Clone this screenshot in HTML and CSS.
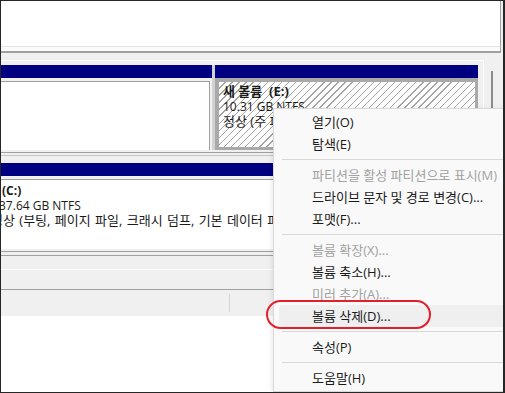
FILE: index.html
```html
<!DOCTYPE html>
<html lang="ko">
<head>
    <meta charset="UTF-8">
    <title>디스크 관리</title>
    <link rel="stylesheet" href="styles.css">
</head>
<body>
    <div class="window">
        <!-- 위쪽 볼륨 목록 -->
        <div class="list-top"></div>
        <div class="list-edge"></div>

        <!-- 디스크 그래픽 영역 -->
        <div class="disks">
            <div class="disk-frame">
                <div class="disk-row row-1">
                    <div class="part part-left">
                        <div class="part-bar"></div>
                        <div class="part-body plain"></div>
                    </div>
                    <div class="part part-e">
                        <div class="part-bar"></div>
                        <div class="part-body selected">
                            <div class="hatch">
                                <div class="label">새 볼륨&nbsp; (E:)</div>
                                <div class="size">10.31 GB NTFS</div>
                                <div>정상 (주 파티션)</div>
                            </div>
                        </div>
                    </div>
                </div>
                <div class="disk-gap"></div>
                <div class="disk-row row-2">
                    <div class="part part-c">
                        <div class="part-bar"></div>
                        <div class="part-body plain c-body">
                            <div class="label size">(C:)</div>
                            <div class="size shift-1">37.64 GB NTFS</div>
                            <div class="status shift-2">정상 (부팅, 페이지 파일, 크래시 덤프, 기본 데이터 파티션)</div>
                        </div>
                    </div>
                </div>
            </div>
            <div class="vscroll"><div class="thumb"></div></div>
        </div>

        <div class="disk-end"></div>
        <div class="status-strip"></div>
        <div class="split"></div>
        <div class="list-header">
            <div class="col col-1"></div>
            <div class="col col-2"></div>
        </div>
        <div class="list-body"></div>

        <!-- 컨텍스트 메뉴 -->
        <div class="menu">
            <div class="item">열기(O)</div>
            <div class="item">탐색(E)</div>
            <div class="sep"></div>
            <div class="item off">파티션을 활성 파티션으로 표시(M)</div>
            <div class="item">드라이브 문자 및 경로 변경(C)...</div>
            <div class="item">포맷(F)...</div>
            <div class="sep"></div>
            <div class="item off">볼륨 확장(X)...</div>
            <div class="item">볼륨 축소(H)...</div>
            <div class="item off">미러 추가(A)...</div>
            <div class="item hover">볼륨 삭제(D)...</div>
            <div class="sep"></div>
            <div class="item">속성(P)</div>
            <div class="sep"></div>
            <div class="item">도움말(H)</div>
        </div>
        <div class="mark"></div>
    </div>
</body>
</html>
```
FILE: styles.css
```css
* {
    box-sizing: border-box;
}
body {
    margin: 0;
    background: #fff;
    font-family: "Open Sans", "Noto Sans CJK KR", sans-serif;
    font-size: 13px;
    color: #1a1a1a;
}
.window {
    position: relative;
    width: 505px;
    height: 393px;
    border: 1px solid #262626;
    border-right-width: 2px;
    overflow: hidden;
    background: #f0f0f0;
}
.list-top {
    height: 45px;
    width: 500px;
    background: #fff;
    border-right: 1px solid #a0a0a0;
}
.list-edge {
    width: 500px;
    height: 7px;
    background: #fbfbfb;
    border-top: 1px solid #e3e3e3;
    border-bottom: 2px solid #a0a0a0;
    border-right: 1px solid #a0a0a0;
}
.disks {
    display: flex;
    padding-top: 7px;
}
.disk-frame {
    width: 483px;
    border-top: 1px solid #fff;
    border-right: 1px solid #fff;
    padding-top: 4px;
}
.vscroll {
    flex: 1;
    padding: 11px 0 0 7px;
}
.thumb {
    width: 2px;
    height: 120px;
    background: #8c8c8c;
}
.disk-row {
    display: flex;
    gap: 3px;
}
.row-1 {
    height: 85px;
    width: 477px;
    background: #d2d2d2;
}
.part {
    display: flex;
    flex-direction: column;
    background: #f0f0f0;
}
.part-bar {
    height: 13px;
    background: #000080;
}
.part-left {
    width: 211px;
}
.part-body.plain {
    flex: 1;
    margin: 3px 2px 0 0;
    background: #fff;
    border-top: 1px solid #a0a0a0;
    border-right: 1px solid #a0a0a0;
}
.part-e {
    flex: 1;
}
.part-body.selected {
    flex: 1;
    background: #a9a9a9;
    padding: 4px 3px 3px 4px;
}
.hatch {
    height: 100%;
    padding: 2px 0 0 4px;
    line-height: 15px;
    white-space: nowrap;
    overflow: hidden;
    background: repeating-linear-gradient(135deg, #fff 0, #fff 4px, #a4a4a4 4px, #a4a4a4 5px);
}
.label {
    font-weight: bold;
}
.size {
    font-size: 12px;
}
.status {
    word-spacing: 1px;
}
.disk-gap {
    height: 13px;
    border-top: 2px solid #f0f0f0;
    box-shadow: inset 0 1px 0 #a0a0a0;
    background: linear-gradient(#f0f0f0 0 3px, #c4c4c4 3px 4px, #f0f0f0 4px);
}
.part-c {
    width: 482px;
    height: 86px;
}
.c-body {
    padding: 3px 0 0 1px;
    line-height: 15px;
    white-space: nowrap;
    overflow: hidden;
}
.shift-1 {
    margin-left: -3px;
}
.shift-2 {
    margin-left: -11px;
}
.disk-end {
    margin-top: 2px;
    height: 5px;
    border-top: 1px solid #a0a0a0;
    border-bottom: 1px solid #a0a0a0;
}
.status-strip {
    height: 14px;
    border-bottom: 1px solid #fff;
}
.split {
    height: 20px;
    border-bottom: 1px solid #a0a0a0;
}
.list-header {
    display: flex;
    height: 25px;
    margin-top: 1px;
    padding-top: 3px;
    background: #f0f0f0;
}
.col-1 {
    width: 229px;
    height: 18px;
    border-right: 1px solid #d4d4d4;
}
.list-body {
    height: 80px;
    background: #fff;
}
.menu {
    position: absolute;
    left: 272px;
    top: 107px;
    width: 250px;
    padding: 2px 0;
    background: #f9f9f9;
    border: 1px solid #d9d9d9;
    box-shadow: 0 2px 6px rgba(0, 0, 0, 0.12);
}
.item {
    height: 22px;
    line-height: 22px;
    margin-left: 5px;
    padding-left: 33px;
    white-space: nowrap;
    border-radius: 4px;
}
.item.off {
    color: #a2a2a2;
}
.item.hover {
    background: #efefef;
}
.sep {
    height: 1px;
    margin: 4px 0 4px 8px;
    background: #d8d8d8;
}
.mark {
    position: absolute;
    left: 265px;
    top: 299px;
    width: 165px;
    height: 29px;
    border: 2px solid #e2202c;
    border-radius: 15px;
}
```
